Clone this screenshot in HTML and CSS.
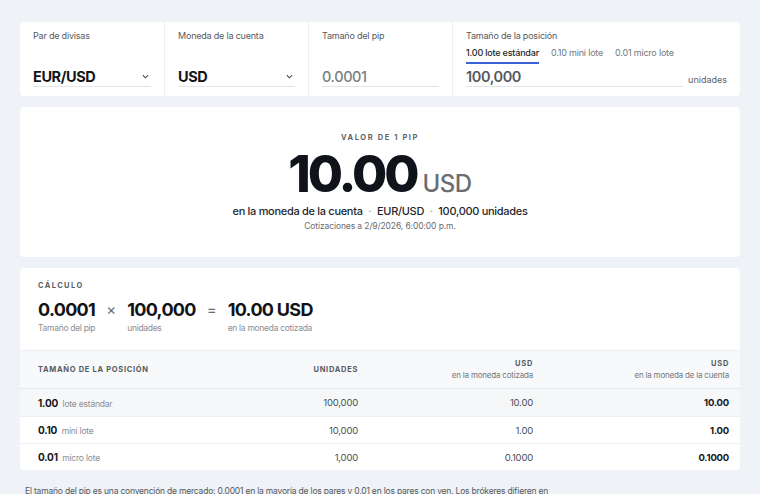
FILE: index.html
```html
<!DOCTYPE html>
<html lang="es">
<head>
<meta charset="utf-8">
<title>Valor del pip</title>
<link rel="stylesheet" href="styles.css">
</head>
<body>
<main class="page">
  <section class="card inputs">
    <div class="field">
      <div class="label">Par de divisas</div>
      <div class="control select"><span>EUR/USD</span><svg class="chev" viewBox="0 0 8 5" width="7" height="5"><path d="M1 1l3 3 3-3" fill="none" stroke="#444" stroke-width="1.2"/></svg></div>
    </div>
    <div class="field">
      <div class="label">Moneda de la cuenta</div>
      <div class="control select"><span>USD</span><svg class="chev" viewBox="0 0 8 5" width="7" height="5"><path d="M1 1l3 3 3-3" fill="none" stroke="#444" stroke-width="1.2"/></svg></div>
    </div>
    <div class="field">
      <div class="label">Tamaño del pip</div>
      <div class="control muted"><span>0.0001</span></div>
    </div>
    <div class="field wide">
      <div class="label">Tamaño de la posición</div>
      <div class="tabs">
        <span class="tab active">1.00 lote estándar</span>
        <span class="tab">0.10 mini lote</span>
        <span class="tab">0.01 micro lote</span>
      </div>
      <div class="pos-row">
        <div class="control pos"><span>100,000</span></div>
        <span class="unit">unidades</span>
      </div>
    </div>
  </section>

  <section class="card result">
    <div class="eyebrow">VALOR DE 1 PIP</div>
    <div class="big"><span class="num">10.00</span><span class="cur">USD</span></div>
    <div class="meta">en la moneda de la cuenta <span class="dot">·</span> EUR/USD <span class="dot">·</span> 100,000 unidades</div>
    <div class="quote">Cotizaciones a 2/9/2026, 6:00:00 p.m.</div>
  </section>

  <section class="card calc">
    <div class="calc-head">
      <div class="eyebrow left">CÁLCULO</div>
      <div class="eq">
        <div class="term"><div class="tv">0.0001</div><div class="tl">Tamaño del pip</div></div>
        <div class="op">×</div>
        <div class="term"><div class="tv">100,000</div><div class="tl">unidades</div></div>
        <div class="op">=</div>
        <div class="term"><div class="tv">10.00 USD</div><div class="tl">en la moneda cotizada</div></div>
      </div>
    </div>
    <div class="table">
      <div class="row head">
        <div class="c1">TAMAÑO DE LA POSICIÓN</div>
        <div class="cr">UNIDADES</div>
        <div class="cr"><div>USD</div><div class="sub">en la moneda cotizada</div></div>
        <div class="cr"><div>USD</div><div class="sub">en la moneda de la cuenta</div></div>
      </div>
      <div class="row sel">
        <div class="c1"><b>1.00</b> <span class="lot">lote estándar</span></div>
        <div class="cr">100,000</div>
        <div class="cr">10.00</div>
        <div class="cr strong">10.00</div>
      </div>
      <div class="row">
        <div class="c1"><b>0.10</b> <span class="lot">mini lote</span></div>
        <div class="cr">10,000</div>
        <div class="cr">1.00</div>
        <div class="cr strong">1.00</div>
      </div>
      <div class="row">
        <div class="c1"><b>0.01</b> <span class="lot">micro lote</span></div>
        <div class="cr">1,000</div>
        <div class="cr">0.1000</div>
        <div class="cr strong">0.1000</div>
      </div>
    </div>
  </section>

  <p class="note">El tamaño del pip es una convención de mercado: 0,0001 en la mayoría de los pares y 0,01 en los pares con yen. Los brókeres difieren en la forma de cotizar los pips fraccionarios.</p>
</main>
</body>
</html>
```

FILE: styles.css
```css
* { box-sizing: border-box; }
html, body { margin: 0; }
body {
  background: #eff2f6;
  font-family: "Inter", "Noto Sans", sans-serif;
  color: #15171c;
}
.page {
  padding: 22px 20px 0 20px;
  display: flex;
  flex-direction: column;
  gap: 11px;
}
.card {
  background: #fff;
  border-radius: 4px;
}
.inputs {
  display: grid;
  grid-template-columns: 144px 144px 144px 1fr;
  height: 74px;
}
.field {
  padding: 8px 13px 0 13px;
  border-left: 1px solid #eceef2;
  display: flex;
  flex-direction: column;
}
.field:first-child { border-left: none; }
.label {
  font-size: 9px;
  color: #555a61;
  letter-spacing: -0.2px;
  height: 12px;
}
.control {
  margin-top: auto;
  margin-bottom: 9px;
  height: 21px;
  padding-top: 2px;
  border-bottom: 1px solid #e1e4e8;
  display: flex;
  align-items: flex-start;
  justify-content: space-between;
  font-size: 14.5px;
  line-height: 18px;
  font-weight: 700;
  letter-spacing: -0.4px;
  color: #121418;
}
.control.muted { color: #7a7e84; font-weight: 500; }
.chev { margin-right: 2px; margin-top: 6px; }
.tabs {
  display: flex;
  gap: 12px;
  margin-top: 5px;
  font-size: 9px;
  letter-spacing: -0.2px;
}
.tab { color: #73787f; padding-bottom: 4px; }
.tab.active {
  color: #1c1f24;
  font-weight: 500;
  border-bottom: 2px solid #3d63d8;
}
.pos-row {
  display: flex;
  align-items: flex-end;
  gap: 5px;
  margin-top: auto;
  margin-bottom: 9px;
}
.control.pos {
  flex: 1;
  margin: 0;
  color: #55595f;
  font-weight: 600;
}
.unit { font-size: 9px; color: #5d6168; padding-bottom: 2px; }

.result {
  height: 150px;
  display: flex;
  flex-direction: column;
  align-items: center;
  padding-top: 26px;
}
.eyebrow {
  font-size: 7.5px;
  line-height: 9px;
  font-weight: 700;
  letter-spacing: 1.6px;
  color: #61656b;
}
.big {
  display: flex;
  align-items: baseline;
  margin-top: 5px;
  height: 54px;
  line-height: 54px;
}
.num {
  font-size: 51px;
  font-weight: 800;
  letter-spacing: -3px;
  color: #11131a;
}
.cur {
  font-size: 24px;
  font-weight: 500;
  color: #6a6d72;
  margin-left: 6px;
  letter-spacing: -0.5px;
}
.meta {
  margin-top: 3px;
  font-size: 11px;
  color: #24272c;
  font-weight: 500;
  letter-spacing: -0.3px;
}
.dot { color: #a5a8ad; margin: 0 3px; }
.quote {
  margin-top: 3px;
  font-size: 8.5px;
  color: #676b71;
  letter-spacing: -0.1px;
}

.calc { overflow: hidden; }
.calc-head { padding: 13px 18px 17px 18px; }
.eyebrow.left { letter-spacing: 1.4px; color: #5a5e64; }
.eq {
  display: flex;
  align-items: flex-start;
  gap: 11px;
  margin-top: 8px;
}
.tv {
  font-size: 18px;
  font-weight: 700;
  letter-spacing: -0.7px;
  color: #121418;
  line-height: 24px;
}
.tl {
  font-size: 8.5px;
  color: #8a8e94;
  letter-spacing: -0.3px;
  margin-top: 1px;
}
.op { font-size: 15px; color: #6d7177; line-height: 24px; }

.row {
  display: grid;
  grid-template-columns: 160px 160px 175px 196px;
  padding: 0 11px 0 18px;
  height: 27px;
  align-items: center;
  border-top: 1px solid #eef0f3;
  font-size: 9.5px;
  color: #4a4e55;
  letter-spacing: -0.2px;
}
.row.head {
  height: 39px;
  background: #f8f9fa;
  font-size: 7.5px;
  font-weight: 700;
  letter-spacing: 0.7px;
  color: #575b62;
  border-top: 1px solid #eceef1;
  border-bottom: 1px solid #e6e9ed;
}
.row.head + .row { border-top: none; }
.row.sel { background: #f6f7f9; }
.cr { text-align: right; }
.sub {
  font-size: 8px;
  font-weight: 400;
  letter-spacing: -0.2px;
  color: #73777d;
  margin-top: 2px;
}
.c1 b { font-weight: 700; color: #15171c; font-size: 10px; }
.lot { font-size: 8.5px; color: #8a8e94; margin-left: 2px; }
.strong { font-weight: 700; color: #15171c; }
.note {
  margin: 4px 0 0 5px;
  max-width: 528px;
  font-size: 8.5px;
  color: #555a61;
  line-height: 12px;
  letter-spacing: -0.2px;
}
```
